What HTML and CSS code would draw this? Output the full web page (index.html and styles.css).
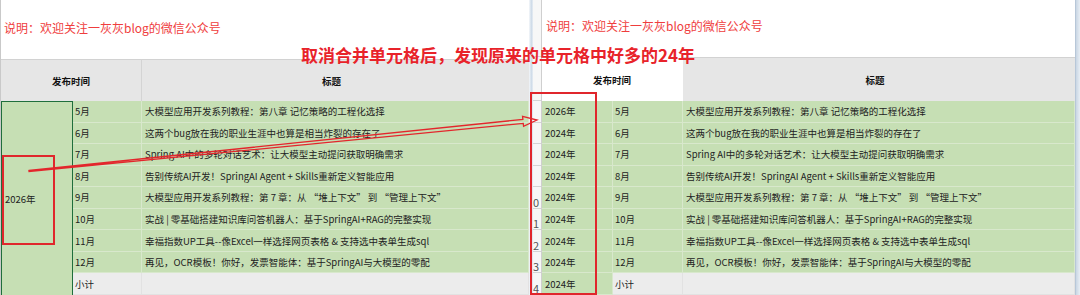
FILE: index.html
```html
<!DOCTYPE html>
<html lang="zh">
<head>
<meta charset="utf-8">
<title>取消合并单元格</title>
<link rel="stylesheet" href="styles.css">
</head>
<body>
<div class="stage">
  <section class="panel left">
    <div class="edge"></div>
    <div class="sheet sheet-left">
      <div class="note">说明：欢迎关注一灰灰blog的微信公众号</div>
      <div class="hd hd-date">发布时间</div>
      <div class="hd hd-title">标题</div>
      <div class="merged">2026年</div>
      <div class="c m">5月</div><div class="c t">大模型应用开发系列教程：第八章 记忆策略的工程化选择</div>
      <div class="c m">6月</div><div class="c t">这两个bug放在我的职业生涯中也算是相当炸裂的存在了</div>
      <div class="c m">7月</div><div class="c t">Spring AI中的多轮对话艺术：让大模型主动提问获取明确需求</div>
      <div class="c m">8月</div><div class="c t">告别传统AI开发！SpringAI Agent + Skills重新定义智能应用</div>
      <div class="c m">9月</div><div class="c t">大模型应用开发系列教程：第 7 章：从 “堆上下文” 到 “管理上下文”</div>
      <div class="c m">10月</div><div class="c t">实战 | 零基础搭建知识库问答机器人：基于SpringAI+RAG的完整实现</div>
      <div class="c m">11月</div><div class="c t">幸福指数UP工具--像Excel一样选择网页表格 &amp; 支持选中表单生成sql</div>
      <div class="c m">12月</div><div class="c t">再见，OCR模板！你好，发票智能体：基于SpringAI与大模型的零配</div>
      <div class="c m sub">小计</div><div class="c t sub"></div>
    </div>
    <div class="box box-left"></div>
  </section>

  <div class="divider"></div>

  <section class="panel right">
    <div class="rowhead">
      <div class="rh rh-top"></div>
      <div class="rh rh-hd"></div>
      <div class="rh"></div><div class="rh"></div><div class="rh"></div><div class="rh"></div>
      <div class="rh">0</div><div class="rh">1</div><div class="rh">2</div><div class="rh">3</div><div class="rh">4</div>
    </div>
    <div class="sheet sheet-right">
      <div class="note note-right">说明：欢迎关注一灰灰blog的微信公众号</div>
      <div class="hd hd-date white">发布时间</div>
      <div class="hd hd-title">标题</div>
      <div class="c y">2026年</div><div class="c m">5月</div><div class="c t">大模型应用开发系列教程：第八章 记忆策略的工程化选择</div>
      <div class="c y">2024年</div><div class="c m">6月</div><div class="c t">这两个bug放在我的职业生涯中也算是相当炸裂的存在了</div>
      <div class="c y">2024年</div><div class="c m">7月</div><div class="c t">Spring AI中的多轮对话艺术：让大模型主动提问获取明确需求</div>
      <div class="c y">2024年</div><div class="c m">8月</div><div class="c t">告别传统AI开发！SpringAI Agent + Skills重新定义智能应用</div>
      <div class="c y">2024年</div><div class="c m">9月</div><div class="c t">大模型应用开发系列教程：第 7 章：从 “堆上下文” 到 “管理上下文”</div>
      <div class="c y">2024年</div><div class="c m">10月</div><div class="c t">实战 | 零基础搭建知识库问答机器人：基于SpringAI+RAG的完整实现</div>
      <div class="c y">2024年</div><div class="c m">11月</div><div class="c t">幸福指数UP工具--像Excel一样选择网页表格 &amp; 支持选中表单生成sql</div>
      <div class="c y">2024年</div><div class="c m">12月</div><div class="c t">再见，OCR模板！你好，发票智能体：基于SpringAI与大模型的零配</div>
      <div class="c y">2024年</div><div class="c m sub">小计</div><div class="c t sub"></div>
    </div>
    <div class="scroll-edge"></div>
  </section>

  <div class="box box-right"></div>
  <div class="caption">取消合并单元格后，发现原来的单元格中好多的24年</div>
  <svg class="arrow" width="1080" height="295" viewBox="0 0 1080 295">
    <polygon points="28.95,170.5 522.87,119.41 522.57,116.43 537,120 523.57,126.38 523.27,123.39 29.05,171.5" fill="none" stroke="#e3262c" stroke-width="1.3" stroke-linejoin="miter"/>
  </svg>
</div>
</body>
</html>
```

FILE: styles.css
```css
* { box-sizing: border-box; }
html, body { margin: 0; padding: 0; background: #fff; }
body {
  font-family: "Noto Sans CJK SC", "Noto Sans", sans-serif;
  color: #222;
}
.stage {
  position: relative;
  width: 1080px;
  height: 295px;
  display: flex;
  overflow: hidden;
}
.panel { display: flex; height: 295px; }
.left { width: 529px; position: relative; }
.edge {
  width: 1px;
  background: #c9c9c9;
}
.sheet { display: grid; }
.sheet-left {
  width: 528px;
  grid-template-columns: 72px 69px 387px;
  grid-template-rows: 59px 42px repeat(9, 21.55px);
}
.sheet-right {
  width: 533px;
  grid-template-columns: 71px 70px 392px;
  grid-template-rows: 57px 44px repeat(9, 21.55px);
}
.note {
  grid-column: 1 / -1;
  display: flex;
  align-items: center;
  padding: 0 0 4px 3px;
  color: #ef3d3d;
  font-size: 12px;
}
.note-right { padding: 0 0 6px 4px; }
.hd {
  background: #e6e6e6;
  display: flex;
  align-items: center;
  justify-content: center;
  font-weight: bold;
  font-size: 9.5px;
  color: #111;
  border-top: 1px solid #d2d2d2;
}
.hd-date { grid-column: 1 / span 2; border-right: 1px solid #d4d4d4; }
.hd-title { padding-right: 8px; }
.hd.white { background: #fff; border-top-color: #fff; border-right-color: #fff; }
.merged {
  grid-row: 3 / span 9;
  grid-column: 1;
  background: #c6dfb4;
  border: 1px solid #1f6e3c;
  border-bottom: none;
  display: flex;
  align-items: center;
  padding: 1px 0 0 3px;
  font-size: 9.5px;
}
.c {
  background: #c6dfb4;
  display: flex;
  align-items: center;
  font-size: 9.5px;
  white-space: nowrap;
  overflow: hidden;
  border-bottom: 1px solid #d8e8cc;
  border-right: 1px solid #d8e8cc;
}
.m { padding-left: 2px; }
.t { padding-left: 3px; }
.y { padding-left: 3px; }
.sub { background: #ececec; border-color: #e2e2e2; }
.divider {
  width: 4px;
  background: linear-gradient(90deg, #f4f7fa, #cfdbe8 60%, #e7edf3);
}
.right { width: 547px; }
.rowhead {
  width: 9px;
  display: grid;
  grid-template-rows: 57px 44px repeat(9, 21.55px);
  background: #f7f7f7;
  border-right: 1px solid #cfcfcf;
}
.rh {
  border-bottom: 1px solid #d4d4d4;
  font-size: 11px;
  color: #555;
  line-height: 1;
  display: flex;
  align-items: flex-end;
  padding-left: 0;
  overflow: hidden;
}
.scroll-edge {
  width: 5px;
  background: linear-gradient(90deg, #c9d6e4, #e8eef4);
  border-left: 1px solid #b8c7d8;
}
.box {
  position: absolute;
  border: 2px solid #e0262c;
}
.box-left { left: 2px; top: 155px; width: 53px; height: 90px; }
.box-right { left: 530px; top: 92px; width: 67px; height: 203px; }
.caption {
  position: absolute;
  left: 301px;
  top: 42px;
  font-size: 17px;
  font-weight: bold;
  color: #e8232a;
  white-space: nowrap;
  background: transparent;
}
.arrow { position: absolute; left: 0; top: 0; pointer-events: none; }
```
